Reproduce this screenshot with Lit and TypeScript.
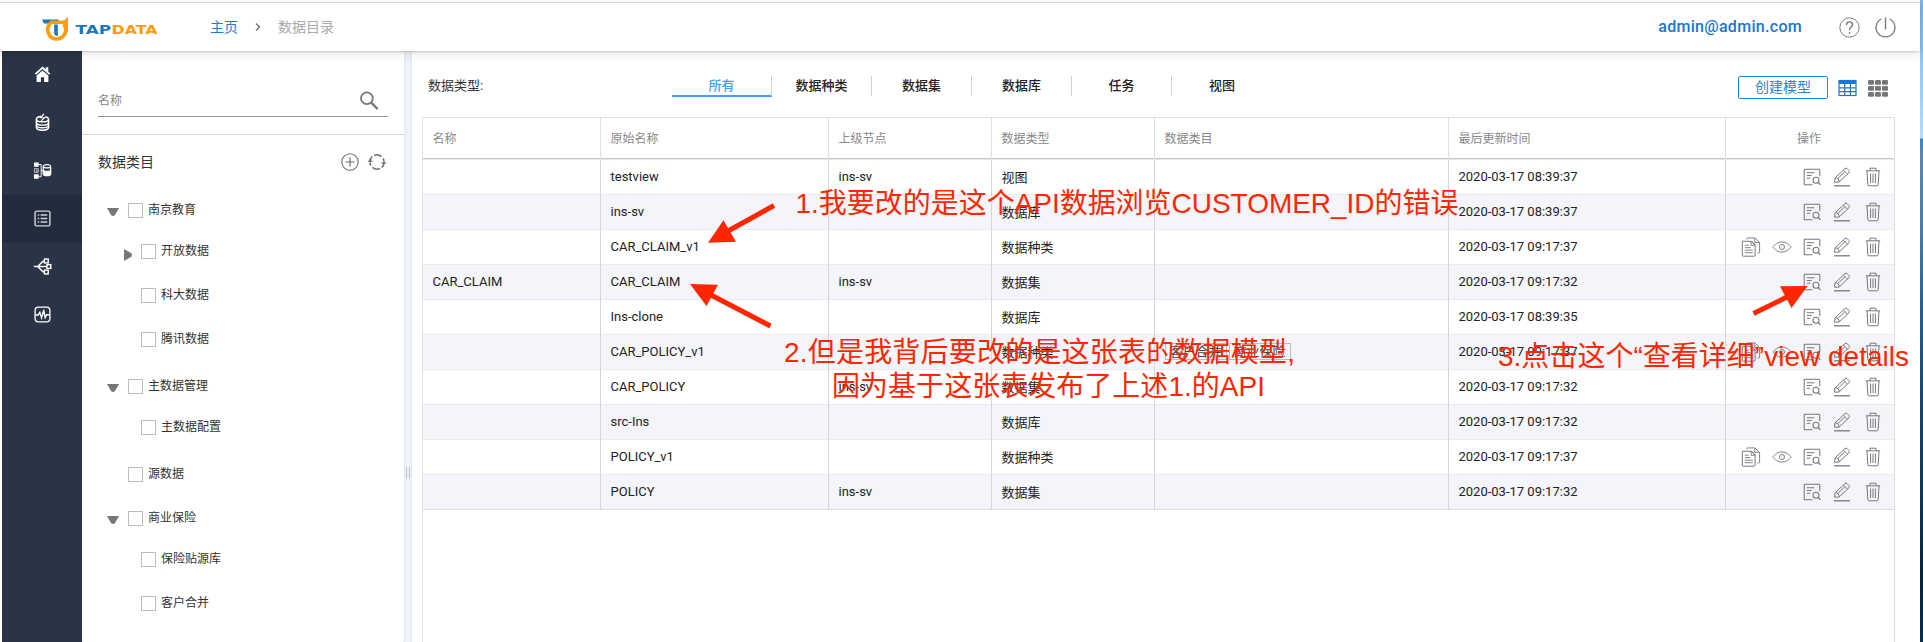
import { LitElement, html, css, svg, nothing } from "lit";
import { customElement, property } from "lit/decorators.js";
import { classMap } from "lit/directives/class-map.js";

type TreeRow = { label: string; level: number; arrow?: "down" | "right"; height: number };
type Row = { name?: string; origin: string; parent?: string; type: string; tags?: string[]; time: string; api?: boolean };

const TREE: TreeRow[] = [
  { label: "南京教育", level: 1, arrow: "down", height: 41 },
  { label: "开放数据", level: 2, arrow: "right", height: 44 },
  { label: "科大数据", level: 2, height: 44 },
  { label: "腾讯数据", level: 2, height: 47 },
  { label: "主数据管理", level: 1, arrow: "down", height: 41 },
  { label: "主数据配置", level: 2, height: 47 },
  { label: "源数据", level: 1, height: 44 },
  { label: "商业保险", level: 1, arrow: "down", height: 41 },
  { label: "保险贴源库", level: 2, height: 44 },
  { label: "客户合并", level: 2, height: 44 },
];

const ROWS: Row[] = [
  { origin: "testview", parent: "ins-sv", type: "视图", time: "2020-03-17 08:39:37" },
  { origin: "ins-sv", type: "数据库", time: "2020-03-17 08:39:37" },
  { origin: "CAR_CLAIM_v1", type: "数据种类", time: "2020-03-17 09:17:37", api: true },
  { name: "CAR_CLAIM", origin: "CAR_CLAIM", parent: "ins-sv", type: "数据集", time: "2020-03-17 09:17:32" },
  { origin: "Ins-clone", type: "数据库", time: "2020-03-17 08:39:35" },
  { origin: "CAR_POLICY_v1", type: "数据种类", tags: ["客户合并", "商业保险"], time: "2020-03-17 09:17:37", api: true },
  { origin: "CAR_POLICY", parent: "ins-sv", type: "数据集", time: "2020-03-17 09:17:32" },
  { origin: "src-Ins", type: "数据库", time: "2020-03-17 09:17:32" },
  { origin: "POLICY_v1", type: "数据种类", time: "2020-03-17 09:17:37", api: true },
  { origin: "POLICY", parent: "ins-sv", type: "数据集", time: "2020-03-17 09:17:32" },
];

const TABS = ["所有", "数据种类", "数据集", "数据库", "任务", "视图"];
const HEADS = ["名称", "原始名称", "上级节点", "数据类型", "数据类目", "最后更新时间", "操作"];

const ICONS: Record<string, unknown> = {
  home: svg`<path fill="currentColor" stroke="none" d="M10 1.500 1.800 8.900l1.300 1.400L10 4.200l6.900 6.100 1.300-1.400-2.100-1.900V2.400h-2.700v2.200zM10 5.800 3.800 11V18h4.500v-5h3.400v5h4.500v-7z"/>`,
  database: svg`<path d="M3.600 6.500v8.600c0 1.800 2.800 3 6.400 3s6.400-1.200 6.400-3V6.500" stroke-width="1.600"/><path d="M3.600 6.500c0-1.500 2.300-2.600 5-2.800M3.600 6.500c0 1.700 2.800 2.800 6.400 2.800s6.400-1.100 6.400-2.800c0-1.200-1.500-2.200-3.600-2.600M3.600 10c0 1.700 2.800 2.800 6.400 2.800s6.400-1.100 6.400-2.800M3.600 13c.4 1.500 3 2.500 6.400 2.500s6-1 6.400-2.500" stroke-width="1.500"/><path d="m11.500 1-3.500 4h4L8.500 8.300" stroke-width="1.300"/>`,
  link: svg`<path fill="currentColor" stroke="none" d="M1 1.500h5v4.500H1zM1 14h5v4.800H1z"/><path d="M1.500 8h4v4h-4zM3 9.500h1.500v1.300H3" stroke-width=".9" opacity=".75"/><path d="M6 3.700h2.600v12.800H6M8.600 10h2" stroke-width="1"/><path d="M10.800 5.800v7.500c0 1.200 1.700 2.200 3.900 2.200s3.900-1 3.900-2.200V5.800c0-2.800-7.800-2.800-7.800 0 0 2 7.800 2 7.800 0" stroke-width="1.300"/><path d="M11 9.500c.5 1.800 7 1.800 7.500 0v4c-.5 1.800-7 1.800-7.500 0z" fill="currentColor" stroke-width="1"/>`,
  list: svg`<rect x="2.200" y="2.200" width="15.600" height="15.600" rx="1.500" stroke-width="1.500"/><path d="M5 6.300h1.500M5 10h1.500M5 13.700h1.500M8 6.300h7M8 10h7M8 13.700h7" stroke-width="1.400"/>`,
  flow: svg`<path d="M.8 10h13.700M5 10l5.500-5.500H12M5 10l5.500 5.500H12" stroke-width="1.600"/><rect x="12" y="2.200" width="4" height="4" stroke-width="1.500"/><rect x="14.700" y="8" width="4" height="4" stroke-width="1.500"/><rect x="12" y="13.800" width="4" height="4" stroke-width="1.500"/>`,
  pulse: svg`<rect x="2.200" y="2.200" width="15.600" height="15.600" rx="3.500" stroke-width="1.400"/><path d="M2.500 10.500h3l1.700-2.700L9 13.500l2.300-8.300 1.500 8 1.500-3h3.200" stroke-width="1.500"/>`,
  search: svg`<circle cx="7.900" cy="8.300" r="5.900" stroke-width="1.800"/><path d="m12.200 12.600 6.500 6.500" stroke-width="2.200"/>`,
  plus: svg`<circle cx="10" cy="10" r="8.200" stroke-width="1.100"/><path d="M10 5.300v9.400M5.300 10h9.400" stroke-width="1.200"/>`,
  refresh: svg`<path d="M3 10.500a7.200 7.200 0 0 0 .9 3M3 9.500a7 7 0 0 1 2.300-5M7 3.400a7.200 7.200 0 0 1 7.600 1.200M17 9.500a7.200 7.200 0 0 0-.9-3M17 10.500a7 7 0 0 1-2.300 5M13 16.600a7.200 7.200 0 0 1-7.600-1.200" stroke-width="1.600"/><path d="M1 9.700h4.400L3.200 7.200zM14.600 10.300H19l-2.200 2.500z" fill="currentColor" stroke-width=".5"/>`,
  help: svg`<circle cx="10" cy="10" r="9.200" stroke-width=".9"/><path d="M7.200 7.600c0-4 5.700-3.700 5.700-.3 0 2.200-2.800 2.300-2.800 4.700v.6" stroke-width="1.300"/><path d="M10.100 14.200v1.600" stroke-width="1.300"/>`,
  power: svg`<path d="M6 1.900a9 9 0 1 0 8 0" stroke-width="1.200"/><path d="M10 .5v11.300" stroke-width="1.300"/>`,
  copy: svg`<path d="M1.300 4.300h8.800l4 4V18.200a1 1 0 0 1-1 1H2.300a1 1 0 0 1-1-1z" stroke-width="1"/><path d="M10.100 4.300v4h4M3.800 8.200h4M3.800 10.700h6M3.800 13.200h8M3.800 15.700h8M5.800 2.500V1.900a1 1 0 0 1 1-1h7l4.800 4.500V15a1 1 0 0 1-1 1h-1.200M13.800 1v4.400h4.600M10.500 4l4 4" stroke-width=".9"/>`,
  eye: svg`<path d="M.8 10S4.500 4.900 10 4.900s9.200 5.100 9.200 5.100-3.700 5.100-9.200 5.100S.8 10 .8 10z" stroke-width=".95"/><circle cx="10" cy="10" r="2.500" stroke-width=".95"/>`,
  detail: svg`<path d="M10.500 17.800H3.200a1 1 0 0 1-1-1V3.200a1 1 0 0 1 1-1h13.600a1 1 0 0 1 1 1v6M4.800 5.700h7.500M4.800 8.500h4.800M4.800 11.300h3.500" stroke-width="1.050"/><circle cx="14" cy="13.300" r="3" stroke-width="1.050"/><path d="m16.200 15.500 2.200 2.300" stroke-width="1.100"/>`,
  edit: svg`<path d="M2.500 15.200 3 11l9.800-9.300a1.700 1.700 0 0 1 2.400 0l1.700 1.700a1.700 1.700 0 0 1 0 2.400L7 15.100zM11.600 3.200l3.900 4M3.400 11c1.800-.6 4.200 1.700 3.600 3.700M5.800 11.500l7-6.700" stroke-width="1"/><path d="M2 18.800h16" stroke-width="1.300"/>`,
  trash: svg`<path d="M2.800 3.800h14.400M7 3.800V1.200h6v2.600M4 4l.8 13.500a1.300 1.300 0 0 0 1.300 1.300h7.800a1.300 1.300 0 0 0 1.300-1.300L16 4M7.600 6.500v9.500M10 6.500v9.500M12.400 6.500v9.500" stroke-width="1"/>`,
  table: svg`<rect x="1" y="2.500" width="17" height="15" stroke-width="1.200"/><path d="M1 4h17" stroke-width="4"/><path d="M1 9.800h17M1 13.600h17M6.700 5v12.500M12.400 5v12.500" stroke-width="1.200"/>`,
  apps: svg`<g fill="currentColor" stroke="none">${[2, 8, 14].map(y => [0, 7, 14].map(x => svg`<rect x=${x} y=${y} width="6" height="4.800" rx="1.200"/>`))}</g>`,
};

@customElement("ui-icon")
class UiIcon extends LitElement {
  static styles = css`
    :host { display: inline-flex; width: 20px; height: 20px; flex: none; }
    .glyph { width: 100%; height: 100%; overflow: visible; fill: none; stroke: currentColor; }
  `;
  @property() name = "";
  render() {
    return html`<svg class="glyph" viewBox="0 0 20 20">${ICONS[this.name]}</svg>`;
  }
}

@customElement("app-header")
class AppHeader extends LitElement {
  static styles = css`
    :host { display: flex; align-items: center; height: 48px; border-top: 1px solid #d9d9d9; padding: 0 24px 0 42px;
      background: #fff; box-shadow: 0 1px 2px rgba(0,0,0,.16), 0 3px 10px rgba(0,0,0,.1); z-index: 2; }
    .logo { width: 118px; height: 28px; overflow: visible; flex: none; }
    .wordmark { font: bold 12.4px "DejaVu Sans", sans-serif; }
    .blue { fill: #1878b8; }
    .orange { fill: #ff9c0c; }
    .crumbs { display: flex; align-items: center; margin-left: 50px; font-size: 14px; line-height: 20px; color: #aaa; flex: 1; }
    .home { color: #1f7bd2; width: 45px; }
    .sep { width: 6px; height: 10px; fill: none; stroke: #777; stroke-width: 1.5; margin-right: 17px; }
    .mail { font-size: 16px; font-weight: 500; line-height: 20px; color: #1976d2; letter-spacing: .3px; margin-right: 37px; }
    .round { width: 21px; height: 21px; color: #777; }
    .power { margin-left: 15px; }
  `;
  render() {
    return html`
      <svg class="logo" viewBox="42 13 118 28">
        <path class="blue" d="M42 19.500h17l-3 3.800H52l-2 2.500-2.500-2.300h-3.500z"/>
        <path fill="none" stroke="#ff9c0c" stroke-width="3.700" d="M50.500 23.200a9.100 9.100 0 1 0 13.300.9"/>
        <path class="orange" d="M50 24v-3.500h14l4-3.500v15h-3.600l-1-8z"/>
        <path class="blue" d="M54.200 24.500h3.600v11.500c-1.600 0-3.600-.8-3.600-2.500z"/>
        <text class="wordmark blue" x="75.500" y="33.700" textLength="35.500" lengthAdjust="spacingAndGlyphs">TAP</text>
        <text class="wordmark orange" x="111.500" y="33.700" textLength="46" lengthAdjust="spacingAndGlyphs">DATA</text>
      </svg>
      <div class="crumbs">
        <span class="home">主页</span>
        <svg class="sep" viewBox="0 0 6 10"><path d="m1 1.500 3.500 3.500L1 8.500"/></svg>
        <span>数据目录</span>
      </div>
      <span class="mail">admin@admin.com</span>
      <ui-icon class="round" name="help"></ui-icon>
      <ui-icon class="round power" name="power"></ui-icon>
    `;
  }
}

@customElement("app-nav")
class AppNav extends LitElement {
  static styles = css`
    :host { display: block; width: 80px; flex: none; background: #2a3446; color: #fff; }
    .item { display: flex; align-items: center; justify-content: center; height: 48px; box-sizing: border-box; padding-bottom: 1px; }
    .active { background: #232c3c; color: #cfd2d8; }
    .icon { width: 19px; height: 19px; }
  `;
  render() {
    return ["home", "database", "link", "list", "flow", "pulse"].map(
      n => html`<div class=${classMap({ item: true, active: n === "list" })}><ui-icon class="icon" name=${n}></ui-icon></div>`
    );
  }
}

@customElement("category-tree")
class CategoryTree extends LitElement {
  static styles = css`
    :host { display: flex; flex-direction: column; width: 322px; flex: none; background: #fff; border-radius: 3px; overflow: hidden; }
    .search { height: 84px; border-bottom: 1px solid #d5d5d5; padding: 0 16px; flex: none; box-sizing: border-box; }
    .field { display: flex; align-items: center; justify-content: space-between; height: 33px; margin-top: 32px; padding-right: 9px;
      border-bottom: 1px solid #949494; font-size: 12px; color: #888; }
    .field ui-icon { color: #777; }
    .title { display: flex; align-items: center; height: 53px; padding: 0 17px 0 16px; font-size: 14px; color: #333; }
    .grow { flex: 1; padding-bottom: 1px; }
    .title ui-icon { color: #707070; margin-left: 7px; }
    .rows { padding-top: 15px; }
    .row { display: flex; align-items: flex-start; font-size: 12px; color: #333; padding-left: 25px; }
    .sub { padding-left: 38px; }
    .arrow { width: 12px; height: 15px; margin-right: 9px; fill: #777; }
    .sub .arrow { margin-top: 2px; margin-right: 9px; }
    .box { width: 13px; height: 13px; border: 1px solid #bdbdbd; margin-right: 5px; }
    .label { line-height: 15px; }
  `;
  render() {
    return html`
      <div class="search"><div class="field"><span>名称</span><ui-icon name="search"></ui-icon></div></div>
      <div class="title"><span class="grow">数据类目</span><ui-icon name="plus"></ui-icon><ui-icon name="refresh"></ui-icon></div>
      <div class="rows">
        ${TREE.map(r => html`
          <div class=${classMap({ row: true, sub: r.level === 2 })} style="height:${r.height}px">
            <svg class="arrow" viewBox="0 0 12 15">
              ${r.arrow === "down" ? svg`<path d="M0 5h12l-4 7q-2 2-4 0z"/>` : r.arrow === "right" ? svg`<path d="M4 3v12l7-4q2-2 0-4z"/>` : nothing}
            </svg>
            <span class="box"></span><span class="label">${r.label}</span>
          </div>`)}
      </div>
    `;
  }
}

@customElement("catalog-view")
class CatalogView extends LitElement {
  static styles = css`
    :host { display: flex; flex-direction: column; flex: 1; background: #fff; border-radius: 3px 0 0 0; padding: 0 25px 0 10px; box-sizing: border-box; }
    .bar { display: flex; align-items: flex-start; height: 66px; padding: 25px 7px 0 6px; box-sizing: border-box; font-size: 13px; color: #333; flex: none; }
    .caption { width: 244px; line-height: 20px; }
    .tabs { display: flex; flex: 1; }
    .tab { width: 100px; height: 20px; line-height: 20px; text-align: center; font-weight: 500; color: #222; box-sizing: border-box; border-right: 1px solid #d0d0d0; }
    .tab:last-child { border-right: 0; }
    .on { color: #409eff; box-shadow: 0 1px #409eff, inset 0 -1px #409eff; }
    .create { width: 88px; height: 21px; line-height: 21px; border: 1px solid #2186df; border-radius: 2px; text-align: center; font-size: 14px; color: #2186df; margin-right: 10px; }
    .table-icon { color: #1976d2; margin-top: 2px; margin-right: 10px; }
    .apps-icon { color: #777; margin-top: 2px; }
    .table { flex: 1; border: 1px solid #e0e0e0; border-bottom: 0; border-right-color: #dcdcdc; }
    .row { display: grid; grid-template-columns: 178px 228px 163px 163px 294px 277px 1fr; height: 35px; box-sizing: border-box; border-bottom: 1px solid #ebebeb; }
    .row:last-child { border-bottom-color: #dcdcdf; }
    .even { background: #f4f5fa; }
    .head { height: 41px; border-bottom: 1px solid #c6c6c6; margin-bottom: 0; box-shadow: 0 1px #e9e9e9; margin-bottom: 1px; }
    .cell { display: flex; align-items: center; padding-left: 9.500px; font-size: 13px; color: #222; border-right: 1px solid #d5d5db; margin-bottom: -1px; padding-bottom: 3px; }
    .head .cell { font-size: 12px; color: #888; border-right-color: #e0e0e0; padding-bottom: 2px; }
    .cell:last-child { border-right: 0; }
    .head .cell:last-child { justify-content: center; padding: 0 2px 2px 0; }
    .cell.ops { justify-content: flex-end; gap: 10.300px; padding-right: 11.500px; padding-bottom: 2px; color: #777; }
    .tag { border: 1px solid #bbb; padding: 0 4px; line-height: 15px; margin-right: 2px; white-space: nowrap; font-size: 13px; color: #444; }
  `;
  render() {
    return html`
      <div class="bar">
        <span class="caption">数据类型:</span>
        <div class="tabs">${TABS.map((t, i) => html`<span class=${classMap({ tab: true, on: i === 0 })}>${t}</span>`)}</div>
        <span class="create">创建模型</span>
        <ui-icon class="table-icon" name="table"></ui-icon>
        <ui-icon class="apps-icon" name="apps"></ui-icon>
      </div>
      <div class="table">
        <div class="row head">${HEADS.map(h => html`<div class="cell">${h}</div>`)}</div>
        ${ROWS.map((r, i) => html`
          <div class=${classMap({ row: true, even: i % 2 === 1 })}>
            <div class="cell">${r.name ?? nothing}</div>
            <div class="cell">${r.origin}</div>
            <div class="cell">${r.parent ?? nothing}</div>
            <div class="cell">${r.type}</div>
            <div class="cell">${(r.tags ?? []).map(t => html`<span class="tag">${t}</span>`)}</div>
            <div class="cell">${r.time}</div>
            <div class="cell ops">
              ${(r.api ? ["copy", "eye", "detail", "edit", "trash"] : ["detail", "edit", "trash"]).map(n => html`<ui-icon name=${n}></ui-icon>`)}
            </div>
          </div>`)}
      </div>
    `;
  }
}

@customElement("app-root")
class AppRoot extends LitElement {
  static styles = css`
    :host { display: flex; position: relative; width: 100%; height: 100vh; overflow: hidden; background: #fff;
      font-family: Roboto, "Noto Sans CJK SC", sans-serif; }
    .window { display: flex; flex-direction: column; flex: 1; padding-top: 2px; }
    .body { display: flex; flex: 1; margin-left: 2px; background: #eff3f7; }
    .splitter { display: flex; align-items: center; justify-content: center; gap: 2px; width: 8px; flex: none; box-sizing: border-box;
      border: solid #e3e8ec; border-width: 0 1px; }
    .grip { width: 1px; height: 12px; background: #c5cacf; box-shadow: 0 0 1px #c5cacf; margin-top: 253px; }
    .desktop { width: 3px; flex: none; background: linear-gradient(#7fb4e8 0, #8cc2f3 50px, #b3dcfa 138px, #3d85c0 139px, #5d86ad 155px, #4d7ba5 230px, #2a5c8c 310px, #1b4569 400px, #123552 500px, #0a2238 580px, #0c2d4e 642px); }
    .notes { position: absolute; left: 0; top: 0; width: 1923px; height: 642px; pointer-events: none; z-index: 5; fill: #ff2600; }
    .note { font: 28px "Liberation Sans", "Noto Sans CJK SC", sans-serif; }
    .shaft { stroke: #ff2600; stroke-width: 5; }
  `;
  render() {
    return html`
      <div class="window">
        <app-header></app-header>
        <div class="body">
          <app-nav></app-nav>
          <category-tree></category-tree>
          <div class="splitter"><span class="grip"></span><span class="grip"></span></div>
          <catalog-view></catalog-view>
        </div>
      </div>
      <div class="desktop"></div>
      <svg class="notes" viewBox="0 0 1923 642">
        <path class="shaft" d="M774 205.500 728 231M770.500 326 711 295M1753.500 313.500 1788 296.500"/>
        <path d="M708 242.700 723.500 220.200 736 241.700zM690 284l28 .8-11.500 21.200zM1807.500 286l-27.500 .3 11.500 21.700z"/>
        <text class="note" x="795.500" y="213" textLength="663" lengthAdjust="spacing">1.我要改的是这个API数据浏览CUSTOMER_ID的错误</text>
        <text class="note" x="784" y="361.500" textLength="511" lengthAdjust="spacing">2.但是我背后要改的是这张表的数据模型,</text>
        <text class="note" x="832" y="395.500" textLength="433" lengthAdjust="spacing">因为基于这张表发布了上述1.的API</text>
        <text class="note" x="1498" y="366" textLength="411" lengthAdjust="spacing">3.点击这个“查看详细”view details</text>
      </svg>
    `;
  }
}
